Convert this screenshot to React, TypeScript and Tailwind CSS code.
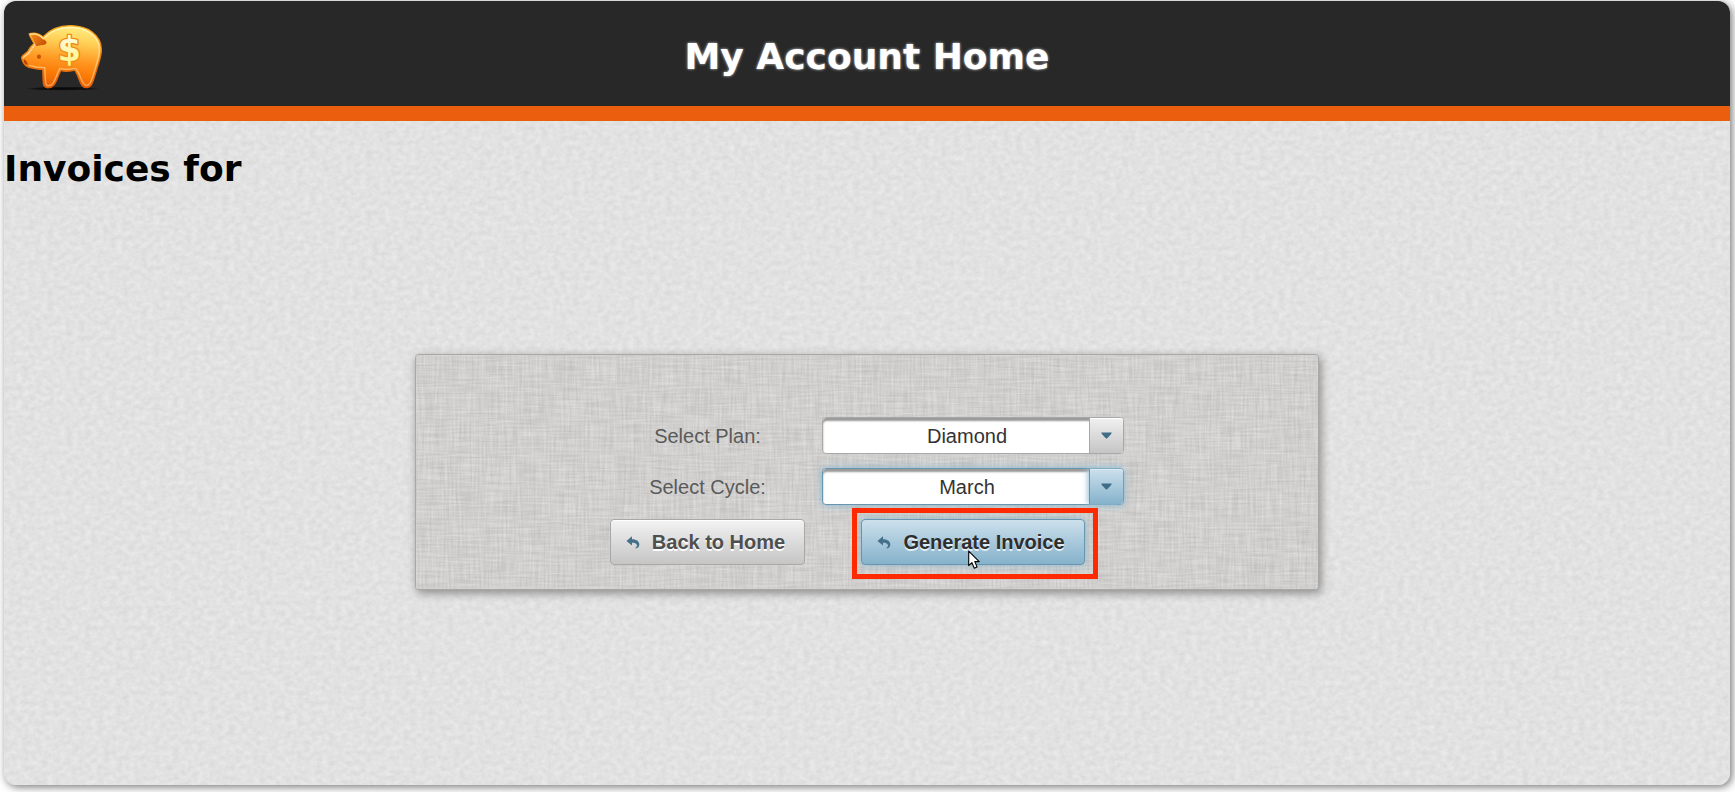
import React, { useId, useState } from "react";

function PiggyBankLogo() {
  return (
    <svg viewBox="0 0 300 240" className="h-20 w-25 shrink-0" role="img" aria-label="Piggy bank">
      <defs>
        <linearGradient id="pigBody" x1="0.6" y1="0" x2="0.45" y2="1">
          <stop offset="0" stopColor="#ffee82" />
          <stop offset="0.25" stopColor="#ffcf55" />
          <stop offset="0.55" stopColor="#ff9722" />
          <stop offset="0.75" stopColor="#fb7d08" />
          <stop offset="1" stopColor="#e85f04" />
        </linearGradient>
        <linearGradient id="pigRim" x1="0" y1="0" x2="0" y2="1">
          <stop offset="0" stopColor="#fff9c4" />
          <stop offset="0.5" stopColor="#ffcf80" />
          <stop offset="1" stopColor="#ffa860" />
        </linearGradient>
        <linearGradient id="pigEdge" x1="0" y1="0" x2="0" y2="1">
          <stop offset="0" stopColor="#f5a21c" />
          <stop offset="1" stopColor="#d95a08" />
        </linearGradient>
        <linearGradient id="pigEar" x1="0" y1="0" x2="1" y2="0.6">
          <stop offset="0" stopColor="#f78d1c" />
          <stop offset="1" stopColor="#c95205" />
        </linearGradient>
        <radialGradient id="pigShadow">
          <stop offset="0" stopColor="#000" stopOpacity="0.85" />
          <stop offset="0.75" stopColor="#000" stopOpacity="0.5" />
          <stop offset="1" stopColor="#000" stopOpacity="0" />
        </radialGradient>
        <linearGradient id="pigDollar" x1="0" y1="0" x2="0" y2="1">
          <stop offset="0" stopColor="#fffdf0" />
          <stop offset="1" stopColor="#fff27c" />
        </linearGradient>
      </defs>
      <ellipse cx="158" cy="221" rx="112" ry="6" fill="url(#pigShadow)" />
      <path
        d="M99 66 C120 43 148 32 180 32 C234 32 274 60 274 104 C274 124 266 144 260 164 C254 184 250 200 244 210 C238 220 222 220 215 210 C207 197 204 178 194 165 C178 169 160 169 153 166 C143 182 143 196 132 210 C123 220 107 221 102 212 C98 204 100 182 98 163 C85 163 66 159 54 156 C44 152 35 138 35 127 C37 119 48 117 54 108 C59 97 65 92 72 86 C67 74 57 62 58 56 C72 52 88 56 99 66 Z"
        fill="url(#pigBody)"
        stroke="url(#pigEdge)"
        strokeWidth="4"
        strokeLinejoin="round"
      />
      <path
        d="M103 69 C124 47 150 38 180 38 C231 38 268 64 268 104 C268 122 261 142 255 163 C249 183 245 198 239 206 C234 213 226 213 221 206 C212 194 209 174 197 160 C178 164 160 164 150 160 C140 176 138 192 128 206 C120 214 110 214 108 207 C105 198 107 178 104 158 C88 158 69 155 57 151"
        fill="none"
        stroke="url(#pigRim)"
        strokeWidth="4"
        strokeLinejoin="round"
        opacity="0.9"
      />
      <path d="M75 88 C70 95 64 101 59 111 C54 119 43 122 40 128" fill="none" stroke="#ffd08a" strokeWidth="5" strokeLinecap="round" />
      <path d="M61 58 C76 54 90 60 101 72 C109 79 113 82 107 88 C98 92 87 91 78 94 C75 81 66 70 61 58 Z" fill="url(#pigEar)" />
      <path d="M62 58 C76 55 90 61 100 71" fill="none" stroke="#ffdc86" strokeWidth="5" strokeLinecap="round" />
      <ellipse cx="87" cy="125" rx="6" ry="6.5" fill="#c95205" />
      <path d="M42 133 C46 134 53 142 53 149 C46 150 39 141 42 133 Z" fill="#b64303" />
      <text
        x="178"
        y="137"
        textAnchor="middle"
        fill="url(#pigDollar)"
        stroke="#ee8a14"
        strokeWidth="8"
        strokeLinejoin="round"
        className="font-['DejaVu_Sans',sans-serif] text-[100px] font-bold [paint-order:stroke]"
      >
        $
      </text>
    </svg>
  );
}

function PaperTexture() {
  return (
    <svg aria-hidden="true" className="pointer-events-none absolute inset-0 h-full w-full">
      <filter id="paper" x="0" y="0" width="100%" height="100%" colorInterpolationFilters="sRGB">
        <feTurbulence type="fractalNoise" baseFrequency="0.16 0.2" numOctaves="3" seed="4" />
        <feColorMatrix values="0.09 0 0 0 0.84  0.09 0 0 0 0.84  0.09 0 0 0 0.84  0 0 0 0 1" />
      </filter>
      <rect width="100%" height="100%" filter="url(#paper)" />
    </svg>
  );
}

function LinenTexture() {
  return (
    <svg aria-hidden="true" className="pointer-events-none absolute inset-0 h-full w-full rounded-[3px]">
      <filter id="linenAcross" x="0" y="0" width="100%" height="100%" colorInterpolationFilters="sRGB">
        <feTurbulence type="fractalNoise" baseFrequency="0.03 0.5" numOctaves="3" seed="8" />
        <feColorMatrix values="0.22 0 0 0 0.706  0.22 0 0 0 0.702  0.22 0 0 0 0.696  0 0 0 0 1" />
      </filter>
      <filter id="linenDown" x="0" y="0" width="100%" height="100%" colorInterpolationFilters="sRGB">
        <feTurbulence type="fractalNoise" baseFrequency="0.5 0.03" numOctaves="3" seed="3" />
        <feColorMatrix values="0.22 0 0 0 0.706  0.22 0 0 0 0.702  0.22 0 0 0 0.696  0 0 0 0 0.5" />
      </filter>
      <rect width="100%" height="100%" filter="url(#linenAcross)" />
      <rect width="100%" height="100%" filter="url(#linenDown)" />
    </svg>
  );
}

function BackArrow() {
  return (
    <svg viewBox="0 0 14 13" aria-hidden="true" className="h-[13px] w-3.5 shrink-0">
      <path d="M0.5 5 L6 0.3 V3.2 C11 3.2 13.3 5.8 13.3 8.4 C13.3 10.6 12 12 9.8 12.6 L9.3 11.8 C10.8 11 11.2 10 10.9 8.9 C10.4 7.2 8.6 6.7 6 6.7 V9.6 Z" fill="#44708a" />
    </svg>
  );
}

function Cursor() {
  return (
    <svg viewBox="0 0 12 19" aria-hidden="true" className="pointer-events-none absolute top-[31px] left-[107px] h-[19px] w-3">
      <path d="M0.7 1.2 V15.6 L3.9 12.6 L6.3 18.2 L9.1 17 L6.8 11.6 H11.2 Z" fill="#fff" stroke="#000" strokeWidth="1.1" strokeLinejoin="round" />
    </svg>
  );
}

type FieldProps = { label: string; options: string[]; initial: string; active?: boolean };

function SelectField({ label, options, initial, active = false }: FieldProps) {
  const id = useId();
  const [value, setValue] = useState(initial);
  return (
    <>
      <label htmlFor={id} className="text-center text-[#5a5a5a]">
        {label}
      </label>
      <div
        className={
          active
            ? "relative flex h-[37px] w-[302px] rounded-sm border border-[#6797b0] bg-white shadow-[0_0_8px_#8ab5cc]"
            : "relative flex h-[37px] w-[302px] rounded-sm border border-[#a8a8a8] bg-white"
        }
      >
        <select
          id={id}
          value={value}
          onChange={(e) => setValue(e.target.value)}
          className="w-full appearance-none rounded-sm bg-transparent pr-[34px] pl-[22px] text-center text-[#333] shadow-[inset_0_3px_2px_#999] outline-none [text-align-last:center]"
        >
          {options.map((o) => (
            <option key={o}>{o}</option>
          ))}
        </select>
        <span
          aria-hidden="true"
          className={
            active
              ? "pointer-events-none absolute inset-y-0 right-0 flex w-[34px] items-center justify-center rounded-r-[3px] border-l border-[#6797b0] bg-linear-to-b from-[#cce0ec] to-[#85b2cb] shadow-[-2px_0_5px_#a5cbe0,inset_0_1px_0_#dcebf4]"
              : "pointer-events-none absolute inset-y-0 right-0 flex w-[34px] items-center justify-center rounded-r-[3px] border-l border-[#a8a8a8] bg-linear-to-b from-[#f1f1f1] to-[#c5c5c5] shadow-[inset_0_1px_0_#fff]"
          }
        >
          <svg viewBox="0 0 11 7" className="h-[7px] w-[11px]">
            <path d="M0.3 0.4 H10.7 L10.2 2 L6.2 6.3 Q5.5 6.8 4.8 6.3 L0.8 2 Z" fill="#3d6d87" />
          </svg>
        </span>
      </div>
    </>
  );
}

export default function App() {
  return (
    <div className="bg-white pt-px pr-[5px] pb-[7px] pl-1 font-['Liberation_Sans',Arial,sans-serif] text-xl">
      <div className="relative isolate flex min-h-[calc(100vh-8px)] flex-col overflow-clip rounded-xl bg-[#e2e2e2] shadow-[2px_2px_8px_#777]">
        <div className="absolute inset-0 -z-10">
          <PaperTexture />
        </div>
        <header className="grid h-30 grid-cols-[1fr_auto_1fr] items-center border-b-[15px] border-[#eb5e0d] bg-[#282828] px-1.5 pt-[3px]">
          <PiggyBankLogo />
          <h1 className="pt-[3px] font-['DejaVu_Sans',Verdana,sans-serif] text-4xl font-bold text-white [text-shadow:0_0_3px_#ccc]">
            My Account Home
          </h1>
        </header>
        <main className="flex flex-col">
          <h2 className="mt-6 font-['DejaVu_Sans',Verdana,sans-serif] text-4xl leading-12 font-bold text-black">Invoices for</h2>
          <form
            onSubmit={(e) => e.preventDefault()}
            className="relative isolate mx-auto mt-[161px] mb-12 flex w-full max-w-[904px] justify-center rounded-sm border border-[#a8a8a8] bg-[#cfcfcd] pt-[62px] pb-6 shadow-[2px_3px_10px_#888]"
          >
            <div className="absolute inset-0 -z-10">
              <LinenTexture />
            </div>
            <div className="grid grid-cols-[195px_302px] items-center gap-x-[17px] gap-y-3.5">
              <SelectField label="Select Plan:" options={["Silver", "Gold", "Diamond"]} initial="Diamond" />
              <SelectField label="Select Cycle:" options={["January", "February", "March", "April"]} initial="March" active />
              <button
                type="button"
                className="flex h-[46px] items-center justify-center gap-3 justify-self-center rounded-sm border border-[#a8a8a8] bg-linear-to-b from-[#f3f3f3] to-[#c5c5c5] pr-[19px] pl-[15px] font-bold whitespace-nowrap text-[#4f4f4f] shadow-[inset_0_1px_0_#fff] [text-shadow:0_2px_0_#fff]"
              >
                <BackArrow />
                Back to Home
              </button>
              <div className="relative justify-self-center">
                <button
                  type="submit"
                  className="flex h-[46px] items-center justify-center gap-3 rounded-sm border border-[#6797b0] bg-linear-to-b from-[#cce0ec] to-[#85b2cb] pr-[19px] pl-[15px] font-bold whitespace-nowrap text-[#2e2e2e] shadow-[0_0_8px_#8ab5cc] [text-shadow:0_2px_0_#e4eff5]"
                >
                  <BackArrow />
                  Generate Invoice
                </button>
                <div aria-hidden="true" className="pointer-events-none absolute -top-[11px] -right-[13px] -bottom-3.5 -left-[9px] border-5 border-[#ff2a00]" />
                <Cursor />
              </div>
            </div>
          </form>
        </main>
      </div>
    </div>
  );
}
